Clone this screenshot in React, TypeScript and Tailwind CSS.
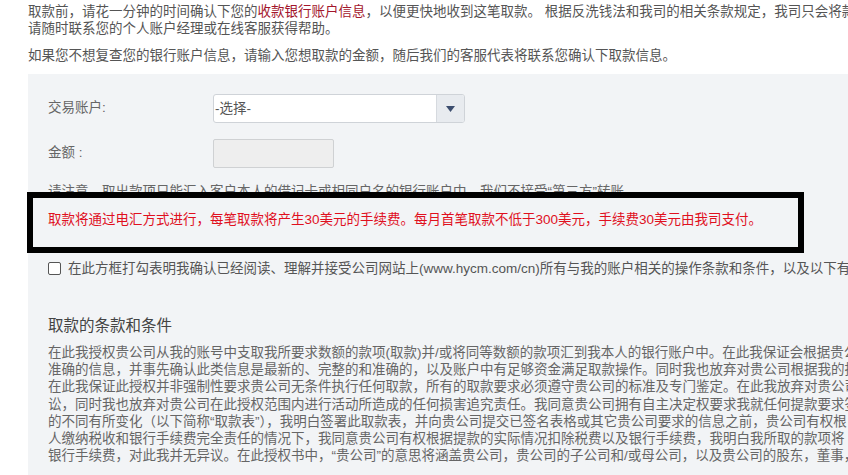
import React from "react";

const TERMS = [
  "在此我授权贵公司从我的账号中支取我所要求数额的款项(取款)并/或将同等数额的款项汇到我本人的银行账户中。在此我保证会根据贵公司的要求提供",
  "准确的信息，并事先确认此类信息是最新的、完整的和准确的，以及账户中有足够资金满足取款操作。同时我也放弃对贵公司根据我的指示",
  "在此我保证此授权并非强制性要求贵公司无条件执行任何取款，所有的取款要求必须遵守贵公司的标准及专门鉴定。在此我放弃对贵公司",
  "讼，同时我也放弃对贵公司在此授权范围内进行活动所造成的任何损害追究责任。我同意贵公司拥有自主决定权要求我就任何提款要求签",
  "的不同有所变化（以下简称“取款表”），我明白签署此取款表，并向贵公司提交已签名表格或其它贵公司要求的信息之前，贵公司有权根",
  "人缴纳税收和银行手续费完全责任的情况下，我同意贵公司有权根据提款的实际情况扣除税费以及银行手续费，我明白我所取的款项将",
  "银行手续费，对此我并无异议。在此授权书中，“贵公司”的意思将涵盖贵公司，贵公司的子公司和/或母公司，以及贵公司的股东，董事，",
];

export default function App() {
  return (
    <div className="w-[848px] h-[475px] overflow-hidden bg-white text-[13.5px] text-[#555] font-['Liberation_Sans','Noto_Sans_CJK_SC',sans-serif]">
      {/* intro */}
      <div className="pl-[28px] pt-[3px] leading-[17px] whitespace-nowrap">
        <p>
          取款前，请花一分钟的时间确认下您的
          <span className="text-[#a3162c]">收款银行账户信息</span>
          ，以便更快地收到这笔取款。 根据反洗钱法和我司的相关条款规定，我司只会将款项汇入您本人名下的银行账户，如有疑问，
        </p>
        <p>请随时联系您的个人账户经理或在线客服获得帮助。</p>
        <p className="mt-[10px]">
          如果您不想复查您的银行账户信息，请输入您想取款的金额，随后我们的客服代表将联系您确认下取款信息。
        </p>
      </div>

      {/* form panel */}
      <div className="ml-[28px] mt-[10px] w-[900px] bg-[#f2f4f6] pl-[20px] pt-[20px] pb-10 whitespace-nowrap">
        <div className="flex items-center">
          <span className="w-[165px] text-[#666]">交易账户:</span>
          <div className="flex h-[29px] w-[252px] rounded-[3px] border border-[#cfd3d8] bg-white overflow-hidden">
            <span className="flex-1 pl-[1px] leading-[27px] text-[#555]">-选择-</span>
            <span className="flex w-[28px] items-center justify-center border-l border-[#d6dadf] bg-[#e8ebef]">
              <svg width="9" height="6" viewBox="0 0 9 6">
                <path d="M0 0h9L4.5 6z" fill="#3c4d6e" />
              </svg>
            </span>
          </div>
        </div>

        <div className="mt-4 flex items-center">
          <span className="w-[165px] text-[#666]">金额 :</span>
          <div className="h-[29px] w-[121px] rounded-[2px] border border-[#cfd1d3] bg-[#eeeeee]" />
        </div>

        <p className="mt-[15px] leading-[17px] text-[#666]">
          请注意，取出款项只能汇入客户本人的借记卡或相同户名的银行账户中，我们不接受“第三方”转账。
        </p>

        {/* annotation frame drawn over the notice */}
        <div className="relative mt-[11px] leading-[17px]">
          <div className="absolute left-[-21px] top-[-19px] h-[61px] w-[777px] border-[6px] border-black bg-[#f2f4f6]" />
          <p className="relative text-[13.5px] text-[#e0101e]">
            取款将通过电汇方式进行，每笔取款将产生30美元的手续费。每月首笔取款不低于300美元，手续费30美元由我司支付。
          </p>
        </div>

        <label className="mt-[32px] flex items-center gap-[7px] leading-[17px]">
          <span className="h-[13px] w-[13px] shrink-0 rounded-[2px] border border-[#555] bg-white" />
          <span>
            在此方框打勾表明我确认已经阅读、理解并接受公司网站上(www.hycm.com/cn)所有与我的账户相关的操作条款和条件，以及以下有关取款的条款和条件。
          </span>
        </label>

        <h3 className="mt-[39px] text-[15.5px] leading-[20px] text-[#444]">取款的条款和条件</h3>

        <div className="mt-[8px] leading-[17.2px] text-[#666]">
          {TERMS.map((line) => (
            <p key={line}>{line}</p>
          ))}
        </div>
      </div>
    </div>
  );
}
